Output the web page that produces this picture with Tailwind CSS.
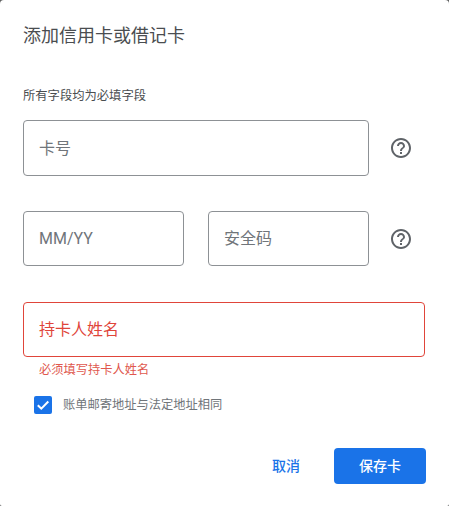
<!DOCTYPE html>
<html lang="zh-CN">
<head>
    <meta charset="UTF-8">
    <title>添加信用卡或借记卡</title>
    <script src="https://cdn.jsdelivr.net/npm/@tailwindcss/browser@4"></script>
</head>
<body class="bg-[#5f6060] font-['Roboto','Noto_Sans_CJK_SC',sans-serif]">
    <div class="w-[449px] h-[506px] bg-white rounded-t-[4px] rounded-b-[2px] overflow-hidden pt-[24px] px-[23px] relative">
        <h1 class="text-[18px] leading-[24px] text-[#4a4d50] font-normal">添加信用卡或借记卡</h1>

        <p class="mt-[39px] pt-[1px] text-[12.3px] leading-[16px] text-[#4a4d50]">所有字段均为必填字段</p>

        <!-- card number -->
        <div class="mt-[16px] flex items-center">
            <div class="w-[346px] h-[56px] border border-[#8d9195] rounded-[4px] flex items-center pl-[15px] pt-[1px] text-[16px] text-[#70757a]">卡号</div>
            <svg class="ml-[20px] w-[24px] h-[24px]" viewBox="0 0 24 24" fill="#5f6368"><path d="M11 18h2v-2h-2v2zm1-16C6.48 2 2 6.48 2 12s4.48 10 10 10 10-4.48 10-10S17.52 2 12 2zm0 18c-4.41 0-8-3.59-8-8s3.59-8 8-8 8 3.59 8 8-3.59 8-8 8zm0-14c-2.21 0-4 1.79-4 4h2c0-1.1.9-2 2-2s2 .9 2 2c0 2-3 1.75-3 5h2c0-2.25 3-2.5 3-5 0-2.21-1.79-4-4-4z"/></svg>
        </div>

        <!-- expiry + cvc -->
        <div class="mt-[35px] flex items-center">
            <div class="w-[161px] h-[55px] border border-[#8d9195] rounded-[4px] flex items-center pl-[15px] text-[16px] text-[#70757a]">MM/YY</div>
            <div class="ml-[24px] w-[161px] h-[55px] border border-[#8d9195] rounded-[4px] flex items-center pl-[15px] text-[16px] text-[#70757a]">安全码</div>
            <svg class="ml-[20px] w-[24px] h-[24px]" viewBox="0 0 24 24" fill="#5f6368"><path d="M11 18h2v-2h-2v2zm1-16C6.48 2 2 6.48 2 12s4.48 10 10 10 10-4.48 10-10S17.52 2 12 2zm0 18c-4.41 0-8-3.59-8-8s3.59-8 8-8 8 3.59 8 8-3.59 8-8 8zm0-14c-2.21 0-4 1.79-4 4h2c0-1.1.9-2 2-2s2 .9 2 2c0 2-3 1.75-3 5h2c0-2.25 3-2.5 3-5 0-2.21-1.79-4-4-4z"/></svg>
        </div>

        <!-- cardholder name -->
        <div class="mt-[36px] w-[402px] h-[55px] border border-[#e0453a] rounded-[4px] flex items-center pl-[15px] text-[16px] text-[#e0453a]">持卡人姓名</div>
        <p class="mt-[5px] pl-[16px] text-[12.25px] leading-[16px] text-[#e0584e]">必须填写持卡人姓名</p>

        <label class="mt-[18px] ml-[11px] flex items-center">
            <span class="w-[18px] h-[18px] rounded-[2px] bg-[#1a73e8] flex items-center justify-center">
                <svg class="w-[18px] h-[18px]" viewBox="0 0 18 18" fill="none" stroke="#fff" stroke-width="2"><path d="M3.8 9.2l3.5 3.5 7-7.2"/></svg>
            </span>
            <span class="ml-[11px] text-[12.25px] leading-[16px] text-[#70757a]">账单邮寄地址与法定地址相同</span>
        </label>

        <div class="mt-[34px] flex items-center justify-end">
            <button class="text-[14px] text-[#1a73e8] font-medium mr-[34px]">取消</button>
            <button class="w-[92px] h-[36px] bg-[#1a73e8] rounded-[4px] text-[14px] text-white font-medium">保存卡</button>
        </div>
    </div>
</body>
</html>
